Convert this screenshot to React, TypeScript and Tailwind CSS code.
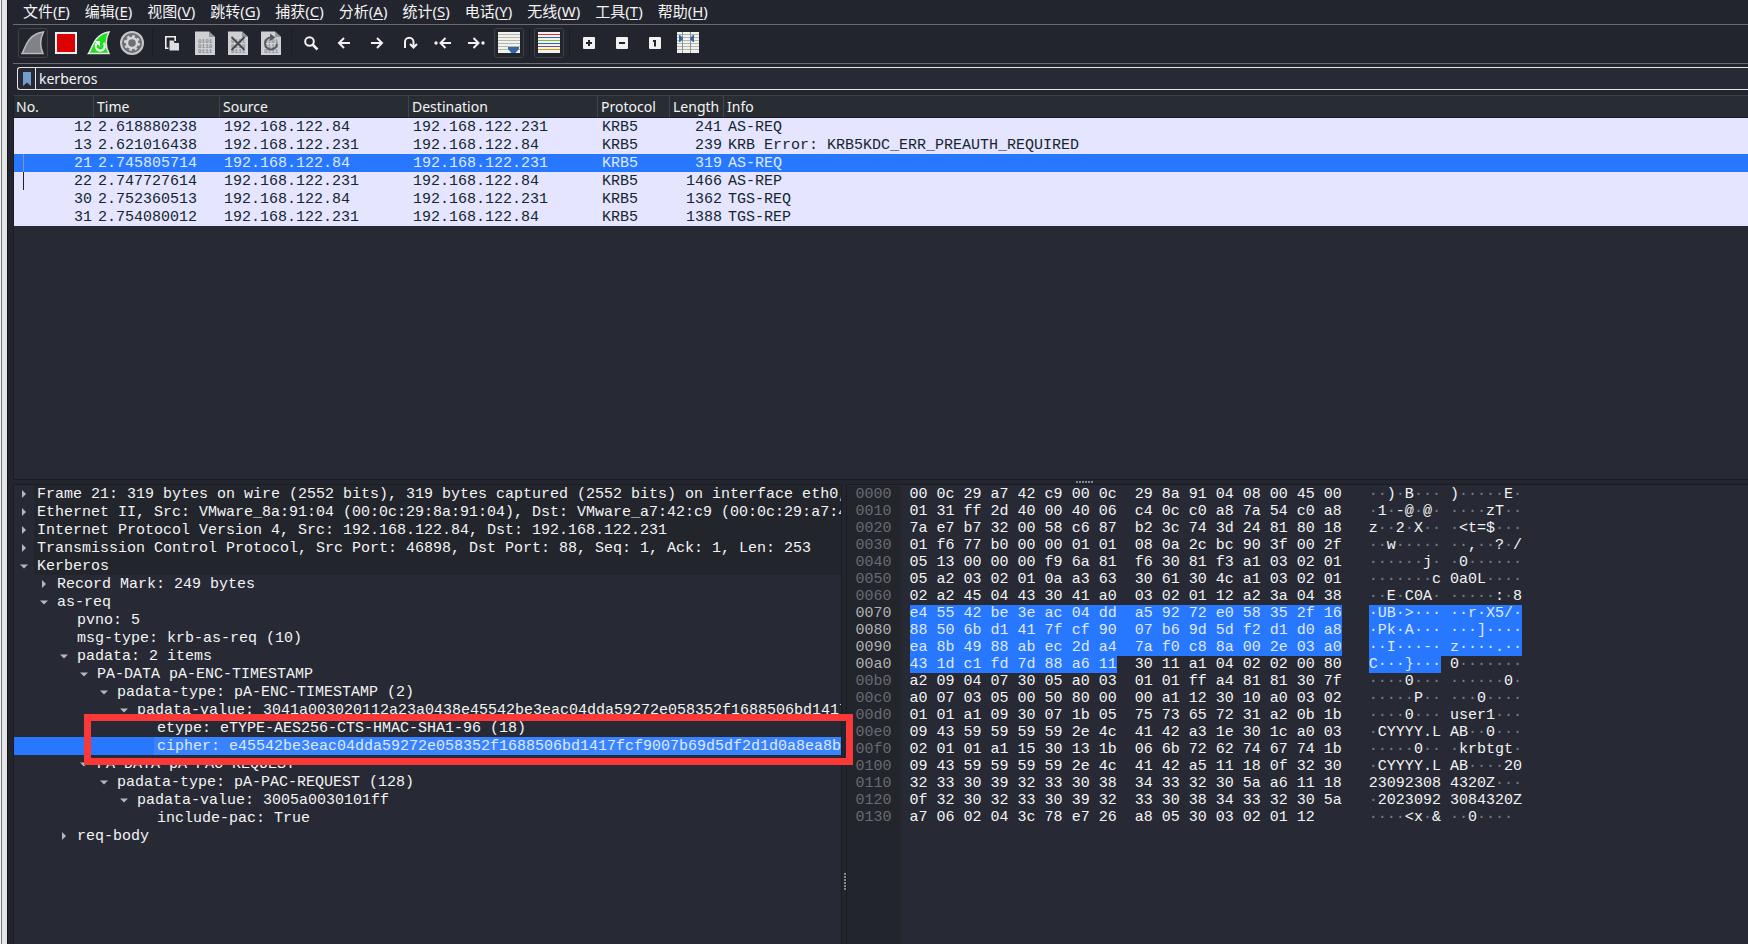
import React, { useState } from 'react';

interface Packet {
  no: number;
  time: string;
  source: string;
  destination: string;
  protocol: string;
  length: number;
  info: string;
  related?: boolean;
}

interface TreeRow {
  level: number;
  text: string;
  state?: 'open' | 'closed';
  selected?: boolean;
}

const MENUS = [
  { label: '文件', hotkey: 'F' },
  { label: '编辑', hotkey: 'E' },
  { label: '视图', hotkey: 'V' },
  { label: '跳转', hotkey: 'G' },
  { label: '捕获', hotkey: 'C' },
  { label: '分析', hotkey: 'A' },
  { label: '统计', hotkey: 'S' },
  { label: '电话', hotkey: 'Y' },
  { label: '无线', hotkey: 'W' },
  { label: '工具', hotkey: 'T' },
  { label: '帮助', hotkey: 'H' },
];

const PACKETS: Packet[] = [
  { no: 12, time: '2.618880238', source: '192.168.122.84', destination: '192.168.122.231', protocol: 'KRB5', length: 241, info: 'AS-REQ' },
  { no: 13, time: '2.621016438', source: '192.168.122.231', destination: '192.168.122.84', protocol: 'KRB5', length: 239, info: 'KRB Error: KRB5KDC_ERR_PREAUTH_REQUIRED' },
  { no: 21, time: '2.745805714', source: '192.168.122.84', destination: '192.168.122.231', protocol: 'KRB5', length: 319, info: 'AS-REQ', related: true },
  { no: 22, time: '2.747727614', source: '192.168.122.231', destination: '192.168.122.84', protocol: 'KRB5', length: 1466, info: 'AS-REP', related: true },
  { no: 30, time: '2.752360513', source: '192.168.122.84', destination: '192.168.122.231', protocol: 'KRB5', length: 1362, info: 'TGS-REQ' },
  { no: 31, time: '2.754080012', source: '192.168.122.231', destination: '192.168.122.84', protocol: 'KRB5', length: 1388, info: 'TGS-REP' },
];

const TREE: TreeRow[] = [
  { level: 0, state: 'closed', text: 'Frame 21: 319 bytes on wire (2552 bits), 319 bytes captured (2552 bits) on interface eth0,' },
  { level: 0, state: 'closed', text: 'Ethernet II, Src: VMware_8a:91:04 (00:0c:29:8a:91:04), Dst: VMware_a7:42:c9 (00:0c:29:a7:4' },
  { level: 0, state: 'closed', text: 'Internet Protocol Version 4, Src: 192.168.122.84, Dst: 192.168.122.231' },
  { level: 0, state: 'closed', text: 'Transmission Control Protocol, Src Port: 46898, Dst Port: 88, Seq: 1, Ack: 1, Len: 253' },
  { level: 0, state: 'open', text: 'Kerberos' },
  { level: 1, state: 'closed', text: 'Record Mark: 249 bytes' },
  { level: 1, state: 'open', text: 'as-req' },
  { level: 2, text: 'pvno: 5' },
  { level: 2, text: 'msg-type: krb-as-req (10)' },
  { level: 2, state: 'open', text: 'padata: 2 items' },
  { level: 3, state: 'open', text: 'PA-DATA pA-ENC-TIMESTAMP' },
  { level: 4, state: 'open', text: 'padata-type: pA-ENC-TIMESTAMP (2)' },
  { level: 5, state: 'open', text: 'padata-value: 3041a003020112a23a0438e45542be3eac04dda59272e058352f1688506bd1417' },
  { level: 6, text: 'etype: eTYPE-AES256-CTS-HMAC-SHA1-96 (18)' },
  { level: 6, selected: true, text: 'cipher: e45542be3eac04dda59272e058352f1688506bd1417fcf9007b69d5df2d1d0a8ea8b' },
  { level: 3, state: 'open', text: 'PA-DATA pA-PAC-REQUEST' },
  { level: 4, state: 'open', text: 'padata-type: pA-PAC-REQUEST (128)' },
  { level: 5, state: 'open', text: 'padata-value: 3005a0030101ff' },
  { level: 6, text: 'include-pac: True' },
  { level: 2, state: 'closed', text: 'req-body' },
];

const HEX_ROWS = [
  '00 0c 29 a7 42 c9 00 0c 29 8a 91 04 08 00 45 00',
  '01 31 ff 2d 40 00 40 06 c4 0c c0 a8 7a 54 c0 a8',
  '7a e7 b7 32 00 58 c6 87 b2 3c 74 3d 24 81 80 18',
  '01 f6 77 b0 00 00 01 01 08 0a 2c bc 90 3f 00 2f',
  '05 13 00 00 00 f9 6a 81 f6 30 81 f3 a1 03 02 01',
  '05 a2 03 02 01 0a a3 63 30 61 30 4c a1 03 02 01',
  '02 a2 45 04 43 30 41 a0 03 02 01 12 a2 3a 04 38',
  'e4 55 42 be 3e ac 04 dd a5 92 72 e0 58 35 2f 16',
  '88 50 6b d1 41 7f cf 90 07 b6 9d 5d f2 d1 d0 a8',
  'ea 8b 49 88 ab ec 2d a4 7a f0 c8 8a 00 2e 03 a0',
  '43 1d c1 fd 7d 88 a6 11 30 11 a1 04 02 02 00 80',
  'a2 09 04 07 30 05 a0 03 01 01 ff a4 81 81 30 7f',
  'a0 07 03 05 00 50 80 00 00 a1 12 30 10 a0 03 02',
  '01 01 a1 09 30 07 1b 05 75 73 65 72 31 a2 0b 1b',
  '09 43 59 59 59 59 2e 4c 41 42 a3 1e 30 1c a0 03',
  '02 01 01 a1 15 30 13 1b 06 6b 72 62 74 67 74 1b',
  '09 43 59 59 59 59 2e 4c 41 42 a5 11 18 0f 32 30',
  '32 33 30 39 32 33 30 38 34 33 32 30 5a a6 11 18',
  '0f 32 30 32 33 30 39 32 33 30 38 34 33 32 30 5a',
  'a7 06 02 04 3c 78 e7 26 a8 05 30 03 02 01 12',
];

// Byte range of the selected cipher field
const SELECTION_START = 0x70;
const SELECTION_END = 0xa8;

const toAscii = (byte: string) => {
  const code = parseInt(byte, 16);
  return code > 0x20 && code < 0x7f ? String.fromCharCode(code) : '·';
};

/* ---------- Toolbar icons ---------- */

const FinIcon = () => (
  <svg width="24" height="24" viewBox="0 0 24 24">
    <path d="M1 22.5 C4 18 6 3 22.5 1 C19 8 19 16 22 22.5 Z" fill="#808287" stroke="#b9babd" strokeWidth="1.5" />
  </svg>
);

const StopIcon = () => (
  <svg width="24" height="24" viewBox="0 0 24 24">
    <rect x="1" y="1" width="22" height="22" fill="#f0f0f0" />
    <rect x="3" y="3" width="18" height="18" fill="#dc0000" />
  </svg>
);

const RestartIcon = () => (
  <svg width="24" height="24" viewBox="0 0 24 24">
    <path d="M1.5 22.5 C5 18 7 3 22 1 C18.5 8 18.5 16 22 22.5 Z" fill="#1be01b" stroke="#e4e4e4" strokeWidth="1.5" />
    <path d="M9.5 12.5 A4.5 4.5 0 1 0 16.5 12" fill="none" stroke="#fff" strokeWidth="2.2" />
    <path d="M7.5 10 H13 V15.5 Z" fill="#fff" />
  </svg>
);

const GearIcon = () => (
  <svg width="24" height="24" viewBox="0 0 24 24">
    <circle cx="12" cy="12" r="11" fill="#6d6f74" stroke="#c6c7c9" strokeWidth="2" />
    <circle cx="12" cy="12" r="5" fill="none" stroke="#d6d7d9" strokeWidth="2.5" />
    <circle cx="12" cy="12" r="7" fill="none" stroke="#d6d7d9" strokeWidth="2" strokeDasharray="2.75 2.75" />
  </svg>
);

const OpenIcon = () => (
  <svg width="16" height="16" viewBox="0 0 16 16">
    <path d="M4.5 13.2 H1.8 V1.8 H11.2 V6" fill="none" stroke="#f0f0f0" strokeWidth="1.6" />
    <path d="M5.5 5.5 H9.5 L10.5 8 H15 V15.5 H5.5 Z" fill="#dcdde0" />
  </svg>
);

const FileIcon = ({ mark }: { mark?: 'close' | 'reload' }) => (
  <svg width="20" height="24" viewBox="0 0 20 24">
    <path d="M0 0.5 H14 L20 6 V24 H0 Z" fill="#cfd0d4" />
    <path d="M14 0.5 V6 H20 Z" fill="#94969b" />
    <g fontFamily="Liberation Mono" fontSize="6" fontWeight="bold" fill="#8b8d92">
      <text x="3" y="12">0101</text>
      <text x="3" y="17">0110</text>
      <text x="3" y="22">0111</text>
    </g>
    {mark === 'close' && <path d="M3.5 6 L16.5 19 M16.5 6 L3.5 19" stroke="#45474e" strokeWidth="1.8" fill="none" />}
    {mark === 'reload' && (
      <>
        <path d="M10 6.5 A6 6 0 1 0 16 12.5" stroke="#565860" strokeWidth="1.8" fill="none" />
        <path d="M9 2.5 L14.5 6.5 L9 10 Z" fill="#565860" />
      </>
    )}
  </svg>
);

const StrokeIcon = ({ d, dot }: { d: string; dot?: number }) => (
  <svg width="18" height="16" viewBox="0 0 18 16" fill="none" stroke="#f2f2f2" strokeWidth="2">
    <path d={d} />
    {dot !== undefined && <circle cx={dot} cy="8" r="1.7" fill="#f2f2f2" stroke="none" />}
  </svg>
);

const LinesIcon = ({ colors, children }: { colors: string[]; children?: React.ReactNode }) => (
  <svg width="22" height="22" viewBox="0 0 22 22">
    <rect width="22" height="21" fill="#f1f1ee" />
    {colors.map((color, i) => (
      <rect key={i} x="0" y={2 + i * 3} width="22" height="1" fill={color} />
    ))}
    {children}
  </svg>
);

const GREY_LINES = ['#b5b6b2', '#b5b6b2', '#b5b6b2', '#b5b6b2', '#b5b6b2', '#b5b6b2'];
const COLOR_LINES = ['#ee2c2c', '#3565b5', '#74c42a', '#3565b5', '#75507b', '#c9a50a'];

const ZoomIcon = ({ d }: { d: string }) => (
  <svg width="12" height="12" viewBox="0 0 12 12">
    <rect width="12" height="12" rx="1" fill="#f1f1f1" />
    <path d={d} stroke="#23252e" strokeWidth="2" fill="none" />
  </svg>
);

interface Tool {
  label: string;
  icon: React.ReactNode;
  framed?: boolean;
}

const TOOL_GROUPS: Tool[][] = [
  [
    { label: 'Start capture', icon: <FinIcon />, framed: true },
    { label: 'Stop capture', icon: <StopIcon /> },
    { label: 'Restart capture', icon: <RestartIcon /> },
    { label: 'Capture options', icon: <GearIcon /> },
  ],
  [
    { label: 'Open', icon: <OpenIcon /> },
    { label: 'Save', icon: <FileIcon /> },
    { label: 'Close', icon: <FileIcon mark="close" /> },
    { label: 'Reload', icon: <FileIcon mark="reload" /> },
  ],
  [
    {
      label: 'Find packet',
      icon: (
        <svg width="16" height="16" viewBox="0 0 16 16" fill="none" stroke="#f2f2f2">
          <circle cx="6.5" cy="6.5" r="4.3" strokeWidth="2" />
          <path d="M9.5 9.5 L14.5 14.5" strokeWidth="2.5" />
        </svg>
      ),
    },
    { label: 'Previous packet', icon: <StrokeIcon d="M15 8 H4 M9 3 L4 8 L9 13" /> },
    { label: 'Next packet', icon: <StrokeIcon d="M3 8 H14 M9 3 L14 8 L9 13" /> },
    { label: 'Go to packet', icon: <StrokeIcon d="M4 13 V7 A4 4 0 0 1 12.5 7 V12 M9 9 L12.5 12.5 L16 9" /> },
    { label: 'First packet', icon: <StrokeIcon d="M17 8 H7 M11.5 3 L6.5 8 L11.5 13" dot={2} /> },
    { label: 'Last packet', icon: <StrokeIcon d="M1 8 H11 M6.5 3 L11.5 8 L6.5 13" dot={16} /> },
    {
      label: 'Auto scroll',
      framed: true,
      icon: (
        <LinesIcon colors={GREY_LINES}>
          <path d="M10 15 H21 V17 L17.5 21 H13.5 L10 17 Z" fill="#3465a4" />
        </LinesIcon>
      ),
    },
  ],
  [{ label: 'Colorize', icon: <LinesIcon colors={COLOR_LINES} />, framed: true }],
  [
    { label: 'Zoom in', icon: <ZoomIcon d="M6 3 V9 M3 6 H9" /> },
    { label: 'Zoom out', icon: <ZoomIcon d="M3 6 H9" /> },
    { label: 'Normal size', icon: <ZoomIcon d="M4 4 H6 V9.5" /> },
    {
      label: 'Resize columns',
      icon: (
        <LinesIcon colors={GREY_LINES}>
          <path d="M5.5 0 V21 M13.5 0 V21" stroke="#8f908d" />
          <path d="M2 3 H3 L6 6 V7 L3 10 H2 Z M17 3 H16 L13 6 V7 L16 10 H17 Z" fill="#3465a4" />
        </LinesIcon>
      ),
    },
  ],
];

const Toolbar = () => (
  <div className="flex h-[39px] items-center gap-[3px] border-b border-[#6b6c72] pb-[2px] pl-[5px]">
    {TOOL_GROUPS.map((group, i) => (
      <React.Fragment key={i}>
        {i > 0 && (
          <span className="flex h-[28px] w-1 shrink-0 justify-center">
            <span className="w-px bg-[#1b1d23]" />
          </span>
        )}
        {group.map((tool) => (
          <button
            key={tool.label}
            aria-label={tool.label}
            className={`flex size-[30px] shrink-0 items-center justify-center rounded-[3px] border ${
              tool.framed ? 'border-[#3f4249] bg-[#23252c]' : 'border-transparent'
            }`}
          >
            {tool.icon}
          </button>
        ))}
      </React.Fragment>
    ))}
  </div>
);

/* ---------- Packet list ---------- */

const PacketList = () => {
  const [selected, setSelected] = useState(21);

  return (
    <section className="flex-[383] basis-0 border-y border-l border-t-[#3c3f46] border-b-[#1a1c21] border-l-[#1a1c21] bg-[#272a34]">
      <table className="w-full table-fixed border-separate border-spacing-0">
        <colgroup>
          <col className="w-[80px]" />
          <col className="w-[126px]" />
          <col className="w-[189px]" />
          <col className="w-[189px]" />
          <col className="w-[72px]" />
          <col className="w-[54px]" />
          <col />
        </colgroup>
        <thead className="bg-[#282d34] font-['Noto_Sans','Noto_Sans_CJK_SC',sans-serif] text-sm text-[#f4f4f4]">
          <tr>
            {['No.', 'Time', 'Source', 'Destination', 'Protocol', 'Length', 'Info'].map((name) => (
              <th
                key={name}
                className="border-r border-b border-r-[#41444b] border-b-[#1a1c21] px-[3px] py-0 text-left leading-[21px] font-normal first:pl-[2px] last:border-r-0"
              >
                {name}
              </th>
            ))}
          </tr>
        </thead>
        <tbody className="text-[15px] leading-[17px] whitespace-pre">
          {PACKETS.map((packet) => (
            <tr
              key={packet.no}
              onClick={() => setSelected(packet.no)}
              className={packet.no === selected ? 'bg-[#2777ff] text-[#dfe9ff]' : 'bg-[#e6e5ff] text-[#12272e]'}
            >
              <td className="p-0">
                <div className="flex justify-end pr-[2px] pl-[9px]">
                  {packet.related && (
                    <span className={`mr-auto w-px ${packet.no === selected ? 'bg-[#8a93a5]' : 'bg-[#12272e]'}`} />
                  )}
                  <span className="pt-px">{packet.no}</span>
                </div>
              </td>
              <td className="px-1 pt-px pb-0">{packet.time}</td>
              <td className="px-1 pt-px pb-0">{packet.source}</td>
              <td className="px-1 pt-px pb-0">{packet.destination}</td>
              <td className="px-1 pt-px pb-0">{packet.protocol}</td>
              <td className="px-[2px] pt-px pb-0 text-right">{packet.length}</td>
              <td className="px-1 pt-px pb-0">{packet.info}</td>
            </tr>
          ))}
        </tbody>
      </table>
    </section>
  );
};

/* ---------- Packet details ---------- */

const INDENT = 20;

const PacketDetails = () => (
  <section className="relative min-w-0 flex-[829] basis-0">
    <ul className="h-full overflow-hidden border-x border-t border-[#1a1c21] bg-[#272a34] text-[15px] leading-[17px] whitespace-pre text-[#f4f4f4]">
      {TREE.map((row, i) => (
        <li key={i} className={`flex h-[18px] ${row.selected ? 'bg-[#2777ff] text-[#dfe9ff]' : ''}`}>
          <span className="shrink-0" style={{ width: row.level * INDENT }} />
          <span className="flex w-5 shrink-0 items-center justify-center">
            {row.state && (
              <button aria-label={row.state === 'open' ? 'Collapse' : 'Expand'}>
                <svg width="8" height="8" viewBox="0 0 8 8" fill="#b6b7ba">
                  <path d={row.state === 'open' ? 'M0 2.5 H8 L4 6.5 Z' : 'M2 0 L6 4 L2 8 Z'} />
                </svg>
              </button>
            )}
          </span>
          <span
            className={`min-w-0 flex-1 overflow-hidden pt-px pl-[3px] ${row.level === 0 ? 'bg-[#22252c]' : ''} ${
              row.selected ? 'bg-[#3a83ff]' : ''
            }`}
          >
            {row.text}
          </span>
        </li>
      ))}
    </ul>
    {/* Highlight frame around the etype and cipher fields */}
    <div className="pointer-events-none absolute top-[230px] -right-[11px] left-[71px] z-10 h-[51px] border-[7px] border-[#fb3838]" />
  </section>
);

/* ---------- Packet bytes ---------- */

const HexCells = ({ bytes, ascii }: { bytes: string[]; ascii?: boolean }) => (
  <>
    {bytes.map((byte, i) => {
      const gap = i === 0 ? '' : ascii ? (i === 8 ? ' ' : '') : i === 8 ? '  ' : ' ';
      if (!ascii) return gap + byte;
      const char = toAscii(byte);
      return (
        <React.Fragment key={i}>
          {gap}
          {char === '·' ? <span className="opacity-40 group-data-[on=true]:opacity-100">·</span> : char}
        </React.Fragment>
      );
    })}
  </>
);

const ByteLine = ({ bytes, count, ascii }: { bytes: string[]; count: number; ascii?: boolean }) => {
  const head = bytes.slice(0, count);
  const tail = bytes.slice(count);
  if (count === 0 || tail.length === 0) {
    return (
      <span data-on={count > 0} className="group inline-block h-[17px] align-top data-[on=true]:bg-[#2777ff] data-[on=true]:text-[#dfe9ff]">
        <HexCells bytes={bytes} ascii={ascii} />
      </span>
    );
  }
  return (
    <>
      <span data-on="true" className="group inline-block h-[17px] bg-[#2777ff] align-top text-[#dfe9ff]">
        <HexCells bytes={head} ascii={ascii} />
      </span>
      {ascii ? ' ' : '  '}
      <span className="group">
        <HexCells bytes={tail} ascii={ascii} />
      </span>
    </>
  );
};

const PacketBytes = () => (
  <section className="flex min-w-0 flex-[902] basis-0 flex-col overflow-hidden border-t border-l border-[#1a1c21] bg-[#272a34] pt-px">
    <table className="border-collapse self-start text-[15px] leading-[17px] whitespace-pre text-[#f4f4f4]">
      <tbody>
        {HEX_ROWS.map((row, i) => {
          const offset = i * 16;
          const bytes = row.split(' ');
          const inRange = offset >= SELECTION_START && offset < SELECTION_END;
          const count = inRange ? Math.min(16, SELECTION_END - offset) : 0;
          return (
            <tr key={offset}>
              <td className={`bg-[#22252c] px-[9px] py-0 ${inRange ? 'text-[#b1b2b5]' : 'text-[#696b70]'}`}>
                {offset.toString(16).padStart(4, '0')}
              </td>
              <td className="py-0 pr-0 pl-[9px]">
                <ByteLine bytes={bytes} count={count} />
              </td>
              <td className="py-0 pr-0 pl-[27px]">
                <ByteLine bytes={bytes} count={count} ascii />
              </td>
            </tr>
          );
        })}
      </tbody>
    </table>
    <div className="w-[54px] flex-1 bg-[#22252c]" />
  </section>
);

const App: React.FC = () => {
  const [filter, setFilter] = useState('kerberos');

  return (
    <div className="flex min-h-screen overflow-hidden bg-[#23252e] font-['Liberation_Mono',monospace]">
      {/* Edge of the window behind */}
      <div className="w-2 shrink-0 border-r border-l border-r-[#101216] border-l-[#f4f4f4] bg-[#e4e5e6]">
        <div className="h-full w-px bg-[#77797c]" />
      </div>

      <div className="ml-[5px] flex min-w-0 flex-1 flex-col">
        <nav className="flex h-[25px] items-center gap-[15px] border-b border-[#6b6c72] pb-[2px] pl-[10px] font-['Noto_Sans','Noto_Sans_CJK_SC',sans-serif] text-[15px] leading-[22px] text-[#f4f4f4]">
          {MENUS.map((menu) => (
            <button key={menu.hotkey} className="shrink-0 whitespace-nowrap">
              {menu.label}(<u className="underline-offset-2">{menu.hotkey}</u>)
            </button>
          ))}
        </nav>

        <Toolbar />

        <div className="mt-[3px] mb-[5px] ml-1 flex h-[23px] rounded-l-[3px] border-y border-l border-[#e6e6e6] bg-[#272a34]">
          <button aria-label="Bookmarks" className="flex w-[18px] shrink-0 items-center justify-center border-r border-[#e6e6e6]">
            <svg width="8" height="14" viewBox="0 0 8 14">
              <path d="M0 0 H8 V14 L4 10.5 L0 14 Z" fill="#729fcf" />
            </svg>
          </button>
          <input
            aria-label="Display filter"
            value={filter}
            onChange={(e) => setFilter(e.target.value)}
            className="min-w-0 flex-1 bg-transparent pl-[3px] font-['Noto_Sans','Noto_Sans_CJK_SC',sans-serif] text-sm text-[#f4f4f4] outline-none"
          />
        </div>

        <PacketList />

        <div className="flex h-1 items-center">
          <div className="ml-[1063px] flex gap-px">
            {[0, 1, 2, 3, 4, 5].map((dot) => (
              <span key={dot} className="size-[2px] bg-[#85878b]" />
            ))}
          </div>
        </div>

        <div className="flex flex-[460] basis-0">
          <PacketDetails />
          <div className="flex w-1 shrink-0 flex-col items-end gap-px pt-[389px]">
            {[0, 1, 2, 3, 4, 5].map((dot) => (
              <span key={dot} className="size-[2px] bg-[#85878b]" />
            ))}
          </div>
          <PacketBytes />
        </div>
      </div>
    </div>
  );
};

export default App;
